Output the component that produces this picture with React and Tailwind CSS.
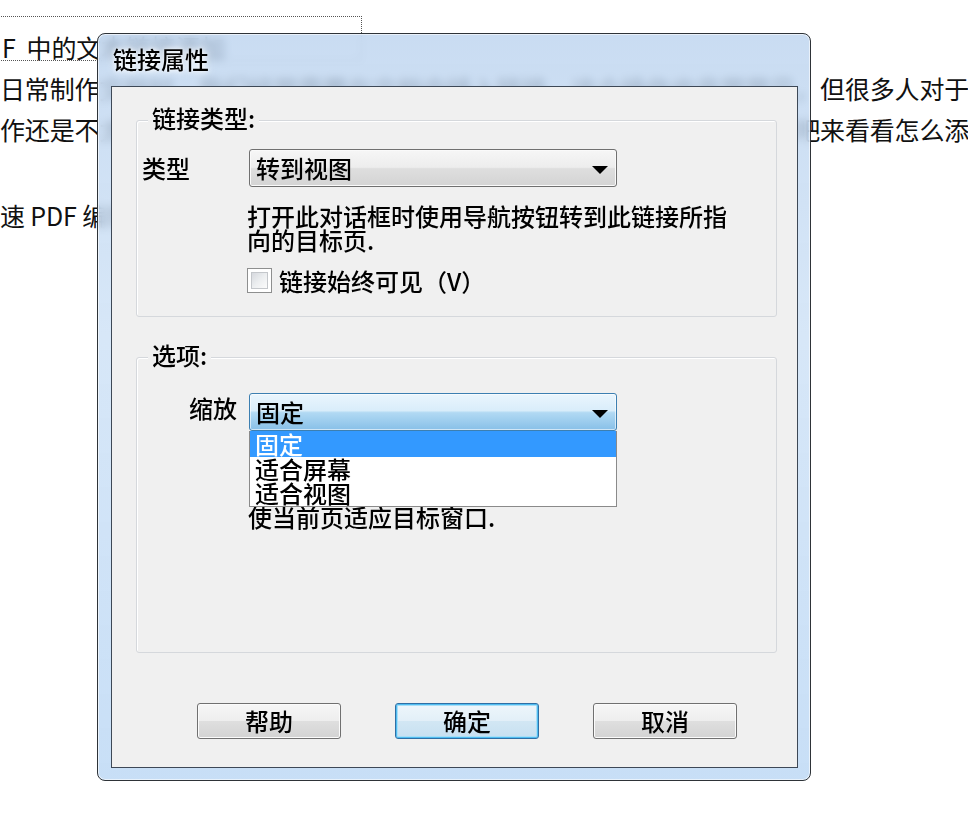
import React from "react";

function Arrow() {
  return (
    <svg width="16" height="8" viewBox="0 0 16 8" className="mt-[4px] shrink-0">
      <path d="M0 0H16L8 8Z" fill="#000" />
    </svg>
  );
}

function GroupBox({ label, height, className = "", children }) {
  return (
    <div
      className={`relative rounded-[3px] border border-[#d5d8dc] shadow-[inset_1px_1px_0_#ffffff] ${className}`}
      style={{ height }}
    >
      <span className="absolute left-[11px] -top-[15px] bg-[#f0f0f0] px-[4px] text-[24px] leading-[24px]">
        {label}
      </span>
      {children}
    </div>
  );
}

function Button({ children, primary }) {
  return (
    <div
      className={
        primary
          ? "flex h-[36px] w-[144px] items-center justify-center rounded-[3px] border border-[#2f6fa5] bg-[linear-gradient(to_bottom,#eef6fb_0%,#e2eff8_50%,#d2e7f4_50%,#c7e0f1_100%)] text-[24px] leading-[24px] shadow-[inset_0_0_0_1px_#4fbcf0,inset_0_0_0_2px_#a9def7]"
          : "flex h-[36px] w-[144px] items-center justify-center rounded-[3px] border border-[#707070] bg-[linear-gradient(to_bottom,#f6f6f6_0%,#eeeeee_50%,#dfdfdf_50%,#d3d3d3_100%)] text-[24px] leading-[24px] shadow-[inset_0_0_0_1px_#fbfbfb]"
      }
    >
      {children}
    </div>
  );
}

export default function App() {
  return (
    <div className="relative h-[814px] w-[968px] overflow-hidden bg-white font-['Noto_Sans_CJK_SC',sans-serif] text-black">
      {/* background document */}
      <div className="whitespace-nowrap pt-[16px] text-[25px] leading-[41px] tracking-[-0.15px] text-[#111]">
        <div className="-ml-[4px] h-[45px] w-[366px] border border-dotted border-[#555]">
          <div className="pl-[5px] pt-[15px] leading-[30px]">F&nbsp; 中的文本链接添加</div>
        </div>
        <div className="mt-[7px]">日常制作文档时，我们经常需要在文档中插入链接，这个操作也非常常见，但很多人对于链接的设置</div>
        <div>作还是不太了解，下面就和小编一起用专业的编辑软件来学习一下，一起吧来看看怎么添加链接吧</div>
        <div className="mt-[45px]">速 PDF 编辑器中的链接工具</div>
      </div>

      {/* dialog window */}
      <div className="absolute left-[97px] top-[33px] flex h-[748px] w-[714px] flex-col rounded-[8px] border border-[#2e3338] bg-[linear-gradient(to_bottom,rgba(186,210,238,0.78),rgba(205,225,246,0.8)_40%,rgba(190,217,245,0.85))] font-medium shadow-[inset_0_0_0_1px_rgba(255,255,255,0.6)] backdrop-blur-[4px]">
        <div className="h-[52px] shrink-0 pl-[15px] pt-[13px] text-[24px] leading-[24px] [text-shadow:0_0_8px_#ffffff,0_0_4px_#ffffff]">
          链接属性
        </div>

        <div className="mb-[12px] ml-[13px] mr-[12px] flex flex-1 flex-col border border-[#3d4856] bg-[#f0f0f0]">
          <div className="ml-[24px] mr-[20px] mt-[33px] flex flex-col">
            {/* group 1 */}
            <GroupBox label="链接类型:" height={197}>
              <div className="flex items-center pt-[28px]">
                <span className="ml-[5px] text-[24px] leading-[24px]">类型</span>
                <div className="ml-[59px] flex h-[38px] w-[368px] items-center justify-between rounded-[3px] border border-[#707070] bg-[linear-gradient(to_bottom,#f6f6f6_0%,#ededed_48%,#dedede_52%,#d4d4d4_100%)] pl-[6px] pr-[8px] shadow-[inset_0_0_0_1px_#fafafa]">
                  <span className="text-[24px] leading-[24px]">转到视图</span>
                  <Arrow />
                </div>
              </div>
              <div className="ml-[110px] mt-[17px] whitespace-nowrap text-[24px] leading-[24px]">
                打开此对话框时使用导航按钮转到此链接所指
                <br />
                向的目标页.
              </div>
              <div className="ml-[110px] mt-[16px] flex items-center">
                <div className="h-[25px] w-[25px] shrink-0 border border-[#8e8f8f] bg-white p-[3px]">
                  <div className="h-full w-full border border-[#c4c7cb] bg-[linear-gradient(135deg,#d6d9de_0%,#eceef0_50%,#fbfbfb_100%)]" />
                </div>
                <span className="ml-[7px] text-[24px] leading-[24px]">链接始终可见（V）</span>
              </div>
            </GroupBox>

            {/* group 2 */}
            <GroupBox label="选项:" height={296} className="mt-[40px]">
              <div className="flex items-start pt-[35px]">
                <span className="ml-[52px] mt-[3px] text-[24px] leading-[24px]">缩放</span>
                <div className="relative ml-[12px]">
                  <div className="flex h-[38px] w-[368px] items-center justify-between rounded-[3px] border border-[#3c7fb1] bg-[linear-gradient(to_bottom,#eaf5fd_0%,#d9edfa_46%,#b1d9f3_52%,#88c0e8_100%)] pl-[6px] pr-[8px] shadow-[inset_0_0_0_1px_rgba(255,255,255,0.6)]">
                    <span className="text-[24px] leading-[24px]">固定</span>
                    <Arrow />
                  </div>
                  <div className="absolute left-0 top-full z-10 flex w-[368px] flex-col border-x border-b border-[#8a8a8a] bg-white text-[24px]">
                    <div className="h-[26px] bg-[#3399ff] pl-[5px] leading-[25px] text-white">固定</div>
                    <div className="h-[25px] pl-[5px] leading-[24px]">适合屏幕</div>
                    <div className="h-[24px] pl-[5px] leading-[22px]">适合视图</div>
                  </div>
                </div>
              </div>
              <div className="ml-[111px] mt-[74px] whitespace-nowrap text-[24px] leading-[24px]">
                使当前页适应目标窗口.
              </div>
            </GroupBox>
          </div>

          {/* buttons */}
          <div className="ml-[85px] mt-[50px] flex gap-[54px]">
            <Button>帮助</Button>
            <Button primary>确定</Button>
            <Button>取消</Button>
          </div>
        </div>
      </div>
    </div>
  );
}
